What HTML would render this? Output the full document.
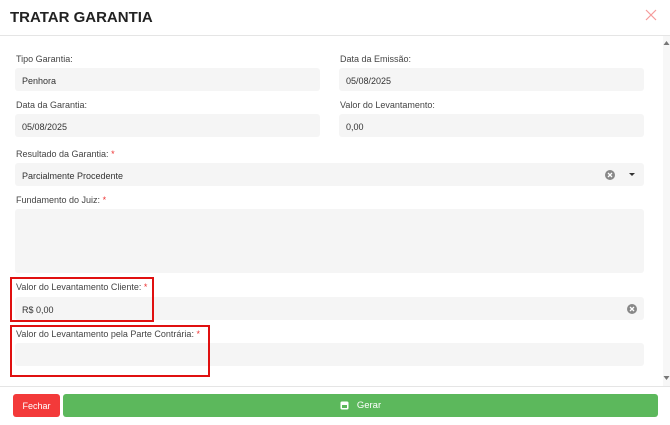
<!DOCTYPE html>
<html><head><meta charset="utf-8"><style>
*{margin:0;padding:0;box-sizing:border-box}
body{width:670px;height:425px;background:#fff;font-family:"Liberation Sans",sans-serif;position:relative;overflow:hidden;color:#333}
.a{position:absolute}
.lbl{font-size:9px;color:#444}
.in{background:#f5f5f5;border-radius:3px;font-size:9px;color:#333;padding-left:7px;padding-top:2px;display:flex;align-items:center}
.st{color:#e33}
.rb{border:2px solid #e01010}
</style></head><body>
<div class="a" style="left:10px;top:9px;font-size:15px;font-weight:bold;color:#222">TRATAR GARANTIA</div>
<svg class="a" style="left:645px;top:9px" width="12" height="12"><path d="M1 1L11 11M11 1L1 11" stroke="#f59a9a" stroke-width="1.2"/></svg>
<div class="a" style="left:0;top:35px;width:670px;height:1px;background:#e5e5e5"></div>
<div class="a" style="left:663px;top:36px;width:7px;height:350px;background:#f7f7f7"></div>
<svg class="a" style="left:663px;top:40px" width="7" height="6"><path d="M0.5 5L3.5 1L6.5 5Z" fill="#777"/></svg>
<svg class="a" style="left:663px;top:375px" width="7" height="6"><path d="M0.5 1L3.5 5L6.5 1Z" fill="#777"/></svg>

<div class="a lbl" style="left:16px;top:54px">Tipo Garantia:</div>
<div class="a in" style="left:15px;top:68px;width:305px;height:23px">Penhora</div>
<div class="a lbl" style="left:340px;top:54px">Data da Emissão:</div>
<div class="a in" style="left:339px;top:68px;width:305px;height:23px">05/08/2025</div>
<div class="a lbl" style="left:16px;top:100px">Data da Garantia:</div>
<div class="a in" style="left:15px;top:114px;width:305px;height:23px">05/08/2025</div>
<div class="a lbl" style="left:340px;top:100px">Valor do Levantamento:</div>
<div class="a in" style="left:339px;top:114px;width:305px;height:23px">0,00</div>
<div class="a lbl" style="left:16px;top:149px">Resultado da Garantia: <span class="st">*</span></div>
<div class="a in" style="left:15px;top:163px;width:629px;height:23px">Parcialmente Procedente</div>
<svg class="a" style="left:605px;top:170px" width="10" height="10"><circle cx="5" cy="5" r="5" fill="#888"/><path d="M3 3L7 7M7 3L3 7" stroke="#fff" stroke-width="1.3"/></svg>
<svg class="a" style="left:629px;top:173px" width="6" height="4"><path d="M0 0H6L3 3Z" fill="#333"/></svg>
<div class="a lbl" style="left:16px;top:195px">Fundamento do Juiz: <span class="st">*</span></div>
<div class="a in" style="left:15px;top:209px;width:629px;height:64px"></div>
<div class="a lbl" style="left:16px;top:282px">Valor do Levantamento Cliente: <span class="st">*</span></div>
<div class="a in" style="left:15px;top:297px;width:629px;height:23px">R$ 0,00</div>
<svg class="a" style="left:627px;top:304px" width="10" height="10"><circle cx="5" cy="5" r="5" fill="#888"/><path d="M3 3L7 7M7 3L3 7" stroke="#fff" stroke-width="1.3"/></svg>
<div class="a lbl" style="left:16px;top:329px">Valor do Levantamento pela Parte Contrária: <span class="st">*</span></div>
<div class="a in" style="left:15px;top:343px;width:629px;height:23px"></div>
<div class="a rb" style="left:10px;top:277px;width:144px;height:45px"></div>
<div class="a rb" style="left:10px;top:325px;width:200px;height:52px"></div>
<div class="a" style="left:0;top:386px;width:670px;height:1px;background:#e5e5e5"></div>
<div class="a" style="left:13px;top:394px;width:47px;height:23px;background:#f33a3a;border-radius:3px;color:#fff;font-size:9px;display:flex;align-items:center;justify-content:center">Fechar</div>
<div class="a" style="left:63px;top:394px;width:595px;height:23px;background:#5cb85c;border-radius:3px;color:#fff;font-size:9.5px;display:flex;align-items:center;justify-content:center">
<svg width="9" height="9" style="margin-right:8px"><rect x="0.5" y="0.5" width="8" height="8" rx="1.5" fill="#fff"/><rect x="2" y="4" width="5" height="3" fill="#5cb85c"/></svg>Gerar</div>
</body></html>
